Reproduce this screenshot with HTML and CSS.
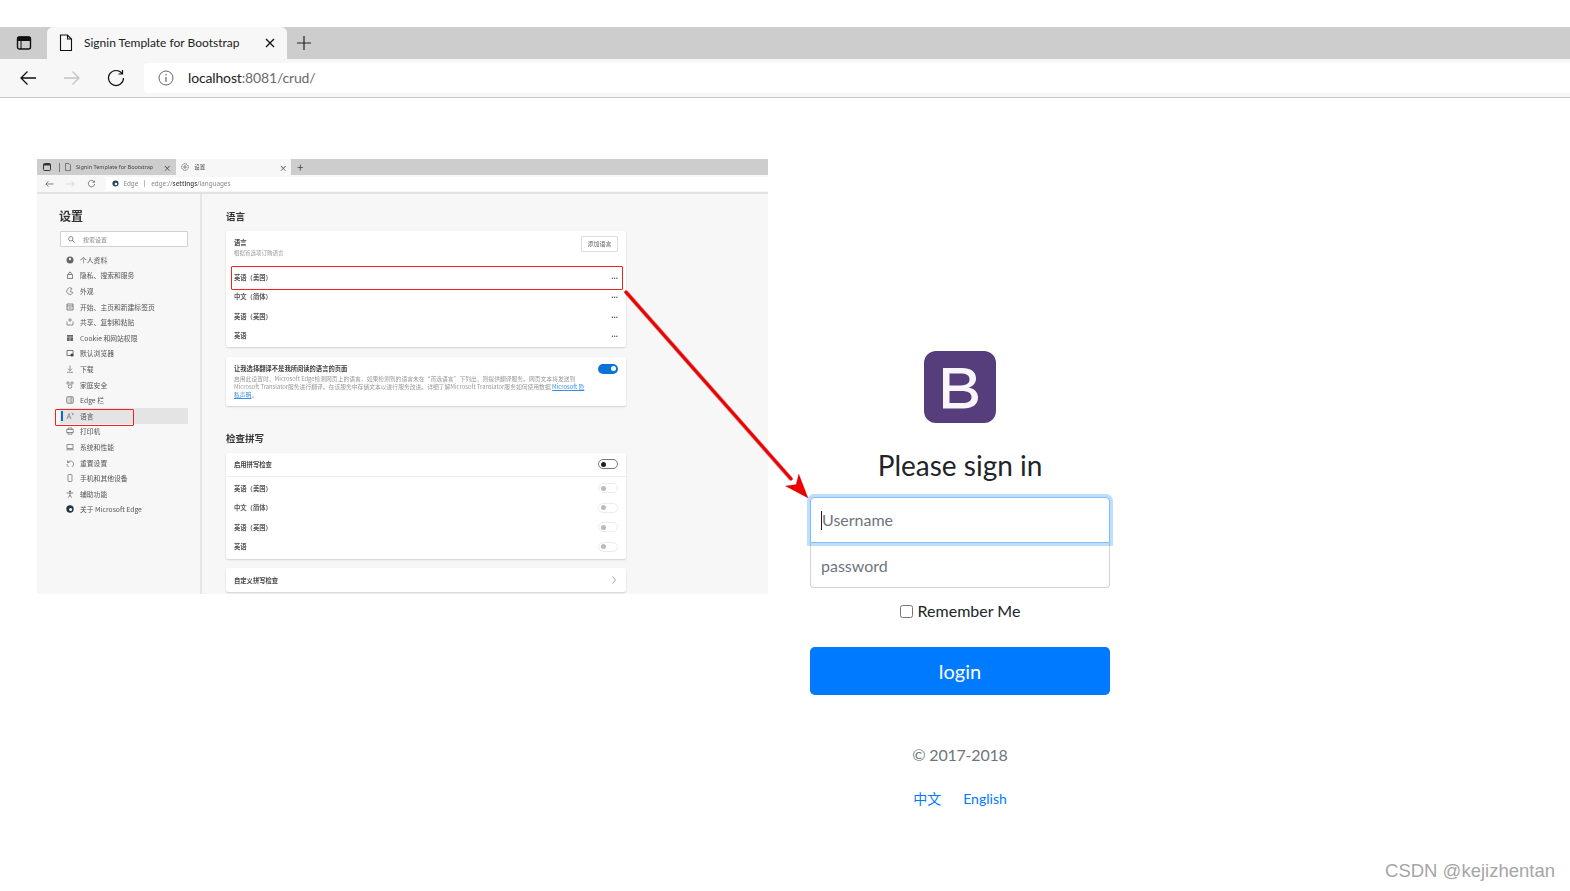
FILE: index.html
```html
<!DOCTYPE html>
<html lang="zh">
<head>
<meta charset="utf-8">
<title>Signin Template for Bootstrap</title>
<link rel="stylesheet" href="styles.css">
</head>
<body>
<div class="topgap"></div>
<header class="tabstrip">
  <svg class="ic-panel" viewBox="0 0 16 16"><rect x="1.5" y="2" width="13" height="12" rx="2" fill="none" stroke="#111" stroke-width="1.4"/><path d="M1.5 5.5h13V3.5a1.5 1.5 0 0 0-1.5-1.5H3a1.5 1.5 0 0 0-1.5 1.5zM5 5v9" fill="#111" stroke="#111"/></svg>
  <div class="tab">
    <svg class="ic-doc" viewBox="0 0 14 18"><path d="M1.5 1h7l4 4v11.5h-11zM8.5 1v4h4" fill="none" stroke="#111" stroke-width="1.1"/></svg>
    <span class="tab-title">Signin Template for Bootstrap</span>
    <svg class="ic-x" viewBox="0 0 10 10"><path d="M1 1l8 8M9 1l-8 8" stroke="#111" stroke-width="1.3"/></svg>
  </div>
  <svg class="ic-plus" viewBox="0 0 16 16"><path d="M8 1v14M1 8h14" stroke="#222" stroke-width="1.2"/></svg>
</header>
<nav class="toolbar">
  <svg class="ic-nav" viewBox="0 0 18 16"><path d="M17 8H2M8.500 1.500L2 8l6.500 6.500" fill="none" stroke="#111" stroke-width="1.3"/></svg>
  <svg class="ic-nav" viewBox="0 0 18 16"><path d="M1 8h15M9.500 1.500L16 8l-6.500 6.500" fill="none" stroke="#c4c4c4" stroke-width="1.3"/></svg>
  <svg class="ic-nav" viewBox="0 0 18 18"><path d="M15 4.500A7.500 7.500 0 1 0 16.500 9M15.500 1v4h-4" fill="none" stroke="#111" stroke-width="1.2"/></svg>
  <div class="addr">
    <svg class="ic-info" viewBox="0 0 16 16"><circle cx="8" cy="8" r="7" fill="none" stroke="#666" stroke-width="1"/><path d="M8 7v5M8 4v1.500" stroke="#666" stroke-width="1.200"/></svg>
    <span class="url"><span class="url-host">localhost</span>:8081/crud/</span>
  </div>
</nav>

<main class="page">
  <section class="shot">
    <div class="m-tabs">
      <svg class="m-panel" viewBox="0 0 8 8"><rect x=".5" y=".5" width="7" height="7" rx="1" fill="none" stroke="#333"/><path d="M.5 1h7v1.500h-7z" fill="#333"/></svg>
      <i class="m-div"></i>
      <svg class="m-doc" viewBox="0 0 6 8"><path d="M.5.500h3.500l1.500 1.500v5.500h-5z" fill="none" stroke="#555" stroke-width=".7"/></svg>
      <span class="m-tabtext">Signin Template for Bootstrap</span>
      <span class="m-x m-x1">×</span>
      <div class="m-tab2">
        <svg class="m-gear" viewBox="0 0 8 8"><circle cx="4" cy="4" r="3.300" fill="none" stroke="#555" stroke-width=".8" stroke-dasharray="1.500 .5"/><circle cx="4" cy="4" r="1.200" fill="none" stroke="#555" stroke-width=".7"/></svg>
        <span class="m-tabtext">设置</span>
        <span class="m-x m-x2">×</span>
      </div>
      <span class="m-plus">+</span>
    </div>
    <div class="m-bar">
      <svg class="m-nav" viewBox="0 0 10 8"><path d="M9.500 4H1M4 1L1 4l3 3" fill="none" stroke="#555" stroke-width=".8"/></svg>
      <svg class="m-nav" viewBox="0 0 10 8"><path d="M.5 4H9M6 1l3 3-3 3" fill="none" stroke="#ccc" stroke-width=".8"/></svg>
      <svg class="m-nav" viewBox="0 0 10 10"><path d="M8.500 2.500A4 4 0 1 0 9 5M8.700.8v2.200H6.500" fill="none" stroke="#444" stroke-width=".8"/></svg>
      <div class="m-addr">
        <svg class="m-edge" viewBox="0 0 8 8"><circle cx="4" cy="4" r="3.500" fill="#245"/><circle cx="4.500" cy="4.500" r="1.500" fill="#fff"/></svg>
        <span class="m-edgetext">Edge</span><i class="m-sep"></i>
        <span class="m-url">edge://<b>settings</b>/languages</span>
      </div>
    </div>
    <div class="m-body">
      <aside class="m-side">
        <h2 class="m-sidetitle">设置</h2>
        <div class="m-search">
          <svg class="m-mag" viewBox="0 0 8 8"><circle cx="3.200" cy="3.200" r="2.500" fill="none" stroke="#555" stroke-width=".8"/><path d="M5 5l2.500 2.500" stroke="#555" stroke-width=".8"/></svg>
          <span>搜索设置</span>
        </div>
        <ul class="m-nav-list">
          <li><svg viewBox="0 0 8 8"><circle cx="4" cy="4" r="3.500" fill="#666"/><circle cx="4" cy="3" r="1.200" fill="#eee"/></svg>个人资料</li>
          <li><svg viewBox="0 0 8 8"><path d="M1.500 3.500h5v4h-5zM2.700 3.500v-1a1.300 1.300 0 0 1 2.600 0v1" fill="none" stroke="#666" stroke-width=".8"/></svg>隐私、搜索和服务</li>
          <li><svg viewBox="0 0 8 8"><path d="M7 5.500A3.300 3.300 0 1 1 6 1.500L4 4.500z" fill="none" stroke="#777" stroke-width=".8"/></svg>外观</li>
          <li><svg viewBox="0 0 8 8"><path d="M1 1h6v6H1zM1 3h6M2.500 5h3" fill="none" stroke="#666" stroke-width=".8"/></svg>开始、主页和新建标签页</li>
          <li><svg viewBox="0 0 8 8"><path d="M1 3.500v3.500h6V3.500M3 1h2v2H3z" fill="none" stroke="#777" stroke-width=".8"/></svg>共享、复制和粘贴</li>
          <li><svg viewBox="0 0 8 8"><path d="M1 1h6v6H1z" fill="#666"/><path d="M1 3h6M4 3v4" stroke="#eee" stroke-width=".6"/></svg>Cookie 和网站权限</li>
          <li><svg viewBox="0 0 8 8"><path d="M1 1.500h6v5H1z" fill="none" stroke="#555" stroke-width=".8"/><circle cx="6" cy="6" r="1.600" fill="#444"/></svg>默认浏览器</li>
          <li><svg viewBox="0 0 8 8"><path d="M4 .5v5M2 3.700L4 5.700l2-2M1 7.300h6" fill="none" stroke="#666" stroke-width=".7"/></svg>下载</li>
          <li><svg viewBox="0 0 8 8"><circle cx="2" cy="2" r="1.200" fill="none" stroke="#666" stroke-width=".7"/><circle cx="6" cy="2" r="1.200" fill="none" stroke="#666" stroke-width=".7"/><circle cx="4" cy="5.500" r="1.800" fill="none" stroke="#666" stroke-width=".7"/></svg>家庭安全</li>
          <li><svg viewBox="0 0 8 8"><rect x=".7" y=".7" width="6.600" height="6.600" rx="1" fill="#ddd" stroke="#666" stroke-width=".7"/><path d="M5 1v6" stroke="#666" stroke-width=".6"/></svg>Edge 栏</li>
          <li class="is-active"><i class="m-accent"></i><svg viewBox="0 0 8 8"><path d="M.8 7.200L3 1.500l2 5.700M1.700 5h2.600M5.500 1l2 1-1.500 1" fill="none" stroke="#666" stroke-width=".6"/></svg>语言</li>
          <li><svg viewBox="0 0 8 8"><path d="M.7 2.500h6.600v3H.7zM2 2.500V1h4v1.500M2 5v2.200h4V5" fill="none" stroke="#666" stroke-width=".7"/></svg>打印机</li>
          <li><svg viewBox="0 0 8 8"><path d="M1 1.500h6v4H1zM.3 6.800h7.400" fill="none" stroke="#666" stroke-width=".7"/></svg>系统和性能</li>
          <li><svg viewBox="0 0 8 8"><path d="M1.500 1.500v2h2M1.500 3.500A3.300 3.300 0 1 1 1 5" fill="none" stroke="#666" stroke-width=".7"/></svg>重置设置</li>
          <li><svg viewBox="0 0 8 8"><rect x="2" y=".5" width="4" height="7" rx=".7" fill="none" stroke="#666" stroke-width=".7"/></svg>手机和其他设备</li>
          <li><svg viewBox="0 0 8 8"><circle cx="4" cy="1.500" r="1" fill="#666"/><path d="M.7 3h6.600M4 3v2M2.500 7.500L4 5l1.500 2.500" fill="none" stroke="#666" stroke-width=".8"/></svg>辅助功能</li>
          <li><svg viewBox="0 0 8 8"><circle cx="4" cy="4" r="3.700" fill="#234"/><circle cx="4.600" cy="4.600" r="1.500" fill="#f7f7f7"/></svg>关于 Microsoft Edge</li>
        </ul>
      </aside>
      <div class="m-main">
        <h3 class="m-h m-h1">语言</h3>
        <div class="m-card m-card1">
          <div class="m-head">
            <div class="m-headtext">
              <div class="m-strong">语言</div>
              <div class="m-hint">根据首选项订购语言</div>
            </div>
            <span class="m-btn">添加语言</span>
          </div>
          <div class="m-row">英语（美国）<span class="m-dots">···</span></div>
          <div class="m-row">中文（简体）<span class="m-dots">···</span></div>
          <div class="m-row">英语（英国）<span class="m-dots">···</span></div>
          <div class="m-row">英语<span class="m-dots">···</span></div>
        </div>
        <div class="m-card m-card2">
          <div class="m-tr-text">
            <div class="m-strong">让我选择翻译不是我所阅读的语言的页面</div>
            <p class="m-desc">启用此设置时，Microsoft Edge检测网页上的语言，如果检测到的语言未在“首选语言”下列出，则提供翻译服务。网页文本将发送到<br>Microsoft Translator服务进行翻译。在该服务中存储文本以进行服务改进。详细了解Microsoft Translator服务如何使用数据 <a class="m-link">Microsoft 隐</a><br><a class="m-link">私声明</a>。</p>
          </div>
          <span class="m-tog m-tog-on"></span>
        </div>
        <h3 class="m-h m-h2">检查拼写</h3>
        <div class="m-card m-card3">
          <div class="m-head m-head2"><span class="m-strong">启用拼写检查</span><span class="m-tog m-tog-off"></span></div>
          <div class="m-row">英语（美国）<span class="m-tog m-tog-dis"></span></div>
          <div class="m-row">中文（简体）<span class="m-tog m-tog-dis"></span></div>
          <div class="m-row">英语（英国）<span class="m-tog m-tog-dis"></span></div>
          <div class="m-row">英语<span class="m-tog m-tog-dis"></span></div>
        </div>
        <div class="m-card m-card4">
          <span class="m-strong">自定义拼写检查</span>
          <svg class="m-chev" viewBox="0 0 4 8"><path d="M.5.5L3.500 4 .5 7.500" fill="none" stroke="#777" stroke-width=".7"/></svg>
        </div>
      </div>
    </div>
    <i class="m-red m-red-nav"></i>
    <i class="m-red m-red-row"></i>
  </section>

  <form class="signin">
    <svg class="logo" viewBox="0 0 72 72"><rect width="72" height="72" rx="12" fill="#563d7c"/><path d="M19 17h19c9 0 14 4 14 10.500 0 4.500-3 8-7.500 9 5.500.8 9.500 4.500 9.500 10 0 7-5.500 11-15 11H19zM25.500 22.500v12h11c6 0 9-2.200 9-6.200s-3-5.800-9-5.800zM25.500 40v12h12.500c6.500 0 9.500-2 9.500-6s-3.500-6-10-6z" fill="#f8f6fb" fill-rule="evenodd"/></svg>
    <h1 class="heading">Please sign in</h1>
    <div class="field field-focus"><i class="caret"></i><span class="field-text">Username</span></div>
    <div class="field field-second"><span>password</span></div>
    <label class="remember"><input type="checkbox" class="check"> Remember Me</label>
    <button type="button" class="login">login</button>
    <p class="copy">© 2017-2018</p>
    <div class="langs"><a class="lang">中文</a><a class="lang">English</a></div>
  </form>

  <svg class="arrow" viewBox="0 0 195 220">
    <path d="M6 7L171 194" stroke="#7a0000" stroke-opacity=".35" stroke-width="4.500"/>
    <path d="M5 6L172 195" stroke="#ee0000" stroke-width="3"/>
    <path d="M188 213L178.800 189 176.100 199.500 165.400 201z" fill="#ee0000" stroke="#900" stroke-opacity=".4" stroke-width=".6"/>
  </svg>
</main>
<div class="watermark">CSDN @kejizhentan</div>
</body>
</html>
```
FILE: styles.css
```css
* { box-sizing: border-box; }
html, body { margin: 0; height: 100%; }
body {
  width: 1570px;
  height: 891px;
  overflow: hidden;
  background: #fff;
  color: #212529;
  font-family: "Lato", "Noto Sans CJK SC", sans-serif;
  position: relative;
}
svg { display: block; flex: none; }

.topgap { height: 27px; }
.tabstrip {
  height: 32px;
  background: #cdcdcd;
  display: flex;
  align-items: center;
  padding-left: 16px;
}
.ic-panel { width: 16px; height: 16px; }
.tab {
  width: 240px;
  height: 32px;
  margin-left: 15px;
  background: #f7f7f7;
  border-radius: 6px 6px 0 0;
  display: flex;
  align-items: center;
  padding-left: 12px;
}
.ic-doc { width: 14px; height: 18px; }
.tab-title { margin-left: 11px; margin-top: -2px; font-size: 12px; width: 181px; white-space: nowrap; color: #222; }
.ic-x { width: 10px; height: 10px; margin-left: 0; }
.ic-plus { width: 16px; height: 16px; margin-left: 9px; }

.toolbar {
  height: 39px;
  background: #f7f7f7;
  border-bottom: 1px solid #c8c8c8;
  display: flex;
  align-items: center;
  padding-left: 19px;
}
.ic-nav { width: 18px; height: 18px; margin-right: 26px; }
.addr {
  flex: 1;
  height: 30px;
  margin-left: -7px;
  background: #fff;
  border-radius: 4px 0 0 4px;
  display: flex;
  align-items: center;
  padding-left: 14px;
}
.ic-info { width: 16px; height: 16px; }
.url { margin-left: 14px; margin-top: -2px; font-size: 14px; letter-spacing: -.15px; color: #6b6b6b; }
.url-host { color: #222; }

.page {
  display: flex;
  align-items: flex-start;
  padding-left: 37px;
  height: 793px;
}

/* embedded screenshot */
.shot {
  position: relative;
  width: 731px;
  height: 435px;
  margin-top: 61px;
  background: #f7f7f7;
  overflow: hidden;
  filter: blur(.35px);
  font-family: "Noto Sans CJK SC", "Noto Sans", sans-serif;
  font-size: 6.800px;
  color: #444;
}
.m-tabs {
  height: 16px;
  background: #cdcdcd;
  display: flex;
  align-items: center;
  padding-left: 6px;
}
.m-panel { width: 8px; height: 8px; }
.m-div { width: 1px; height: 9px; background: #777; margin-left: 8px; }
.m-doc { width: 6px; height: 8px; margin-left: 5px; }
.m-tabtext { font-size: 5.500px; margin-left: 5px; white-space: nowrap; color: #444; font-family: "Noto Sans", "Noto Sans CJK SC", sans-serif; }
.m-x { font-size: 8px; color: #333; }
.m-x1 { margin-left: 10px; }
.m-tab2 {
  width: 115px;
  height: 16px;
  margin-left: 5px;
  background: #f7f7f7;
  display: flex;
  align-items: center;
  padding-left: 5px;
}
.m-gear { width: 8px; height: 8px; }
.m-x2 { margin-left: 74px; }
.m-plus { font-size: 11px; margin-left: 6px; color: #444; line-height: 1; }
.m-bar {
  height: 19px;
  background: #f7f7f7;
  border-bottom: 2px solid #e2e2e2;
  display: flex;
  align-items: center;
  padding-left: 8px;
}
.m-nav { width: 9px; height: 8px; margin-right: 12px; }
.m-addr {
  flex: 1;
  height: 14px;
  margin-left: -2px;
  background: #fff;
  display: flex;
  align-items: center;
  padding-left: 6px;
  font-family: "Noto Sans", sans-serif;
  font-size: 6.300px;
  color: #888;
  white-space: nowrap;
}
.m-edge { width: 7px; height: 7px; }
.m-edgetext { margin-left: 4.500px; }
.m-sep { width: 1px; height: 7px; background: #bbb; margin: 0 6px; }
.m-url b { color: #555; font-weight: 600; }
.m-body { display: flex; height: 400px; }
.m-side {
  width: 165px;
  border-right: 2px solid #e6e6e6;
  padding: 13px 0 0 23px;
  flex: none;
}
.m-sidetitle { margin: 0 0 0 -1px; font-size: 12px; line-height: 18px; font-weight: 700; color: #333; }
.m-search {
  width: 128px;
  height: 16px;
  margin-top: 6px;
  background: #fff;
  border: 1px solid #d0d0d0;
  border-radius: 1px;
  display: flex;
  align-items: center;
  padding-left: 7px;
  color: #888;
  font-size: 6px;
}
.m-search span { margin-left: 8px; }
.m-mag { width: 7px; height: 7px; }
.m-nav-list { list-style: none; margin: 5px 0 0; padding: 0; width: 128px; }
.m-nav-list li {
  height: 15.600px;
  display: flex;
  align-items: center;
  padding-left: 6px;
  color: #555;
  white-space: nowrap;
  position: relative;
}
.m-nav-list svg { width: 8px; height: 8px; margin-right: 6px; }
.m-nav-list .is-active { background: #e4e4e4; }
.m-accent { position: absolute; left: 1px; top: 3px; width: 1.500px; height: 10px; background: #0a6cc4; }

.m-main { flex: 1; padding: 14px 0 0 24px; }
.m-h { margin: 0; font-size: 9.500px; line-height: 16px; font-weight: 700; color: #333; }
.m-card {
  width: 400px;
  background: #fff;
  border-radius: 2px;
  box-shadow: 0 1px 2px rgba(0,0,0,.16);
}
.m-card1 { margin-top: 7px; height: 115.500px; }
.m-head {
  height: 36.500px;
  display: flex;
  justify-content: space-between;
  align-items: center;
  padding: 0 8px;
}
.m-headtext { margin-top: -3px; }
.m-strong { font-weight: 600; color: #444; font-size: 6.300px; line-height: 9px; }
.m-hint { color: #999; font-size: 5.500px; line-height: 9px; margin-top: 1.500px; }
.m-btn {
  border: 1px solid #ddd;
  border-radius: 1px;
  width: 37px;
  height: 16px;
  text-align: center;
  line-height: 14px;
  font-size: 6px;
  color: #666;
  margin-top: -11px;
}
.m-row {
  height: 19.500px;
  display: flex;
  justify-content: space-between;
  align-items: center;
  padding: 0 8px;
  font-weight: 600;
  color: #555;
  font-size: 6.300px;
}
.m-dots { font-family: "Noto Sans", sans-serif; font-size: 8px; color: #555; font-weight: 700; }
.m-card2 {
  margin-top: 10px;
  height: 49px;
  padding: 7px 8px 0;
  display: flex;
  justify-content: space-between;
}
.m-tr-text { width: 365px; white-space: nowrap; }
.m-desc { margin: 2px 0 0; font-size: 5.800px; line-height: 8px; color: #999; }
.m-link { color: #3a8fe0; text-decoration: underline; }
.m-tog {
  width: 20px;
  height: 10px;
  border-radius: 5px;
  position: relative;
  flex: none;
}
.m-tog::after {
  content: "";
  position: absolute;
  top: 2.500px;
  width: 5px;
  height: 5px;
  border-radius: 50%;
}
.m-tog-on { background: #0a74d6; }
.m-tog-on::after { right: 2.500px; background: #fff; }
.m-tog-off { border: 1px solid #777; }
.m-tog-off::after { left: 2px; top: 1.500px; background: #222; }
.m-tog-dis { border: 1px solid #ececec; }
.m-tog-dis::after { left: 2px; top: 1.500px; background: #bbb; }
.m-h2 { margin-top: 24px; }
.m-card3 { margin-top: 7px; height: 106px; }
.m-head2 { height: 24px; border-bottom: 1px solid #eee; margin-bottom: 2px; }
.m-card4 {
  margin-top: 9.500px;
  height: 24px;
  display: flex;
  justify-content: space-between;
  align-items: center;
  padding: 0 10px 0 8px;
}
.m-chev { width: 4px; height: 8px; }
.m-red { position: absolute; border: 1.800px solid #f52020; border-radius: 1px; }
.m-red-nav { left: 18px; top: 250px; width: 79px; height: 17px; }
.m-red-row { left: 194px; top: 107px; width: 392px; height: 24px; }

/* sign-in form */
.signin {
  width: 300px;
  margin: 253px 0 0 42px;
  display: flex;
  flex-direction: column;
  align-items: stretch;
  text-align: center;
}
.logo { width: 72px; height: 72px; align-self: center; }
.heading { margin: 22px 0 0; font-size: 28px; font-weight: 400; line-height: 40px; height: 52px; color: #212529; }
.field {
  height: 46px;
  background: #fff;
  border: 1px solid #ced4da;
  border-radius: 4px 4px 0 0;
  display: flex;
  align-items: center;
  padding-left: 10px;
  font-size: 16px;
  color: #6c757d;
  position: relative;
}
.field-text { margin-top: -2px; }
.field-focus {
  border-color: #80bdff;
  box-shadow: 0 0 0 3px rgba(0,123,255,.25);
  z-index: 1;
}
.field-second { height: 45px; border-top: 0; border-radius: 0 0 4px 4px; padding-top: 1px; }
.caret { width: 1px; height: 19px; background: #222; margin-right: 0; }
.remember {
  margin-top: 13px;
  height: 20px;
  line-height: 20px;
  font-size: 16px;
  display: flex;
  align-items: center;
  justify-content: center;
  gap: 5px;
}
.check { margin: 0; width: 13px; height: 13px; }
.login {
  margin-top: 26px;
  height: 48px;
  border: 0;
  border-radius: 4.800px;
  background: #007bff;
  color: #fff;
  font: 400 20px "Lato", sans-serif;
}
.copy { margin: 49px 0 0; font-size: 16px; line-height: 22px; letter-spacing: -.2px; color: #6c757d; }
.langs { margin-top: 23px; display: flex; justify-content: center; gap: 22px; font-size: 14px; line-height: 20px; }
.lang { color: #007bff; }

.arrow { position: absolute; left: 620px; top: 285px; width: 195px; height: 220px; z-index: 2; pointer-events: none; }
.watermark { position: absolute; right: 15px; top: 859px; font-size: 18.500px; line-height: 24px; color: #a6a6a6; font-family: "Liberation Sans", sans-serif; }
```
